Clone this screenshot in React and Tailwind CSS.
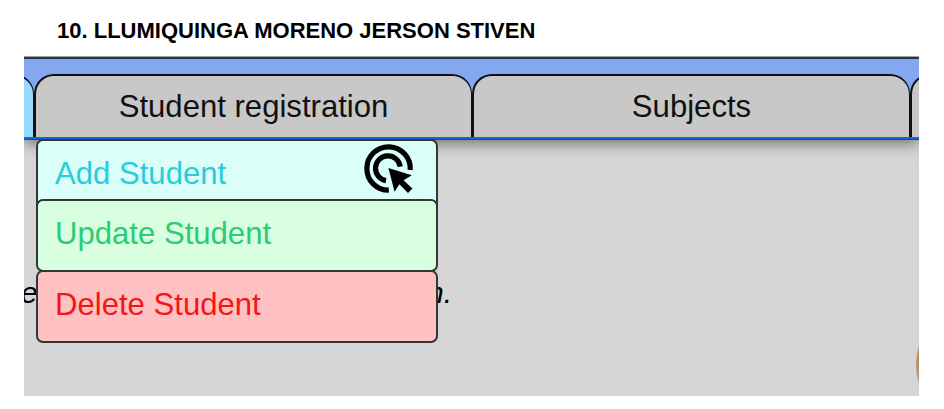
function Tab({ label, className = "" }) {
  return (
    <div
      className={`h-[63px] shrink-0 rounded-t-[20px] border-t-2 border-r border-l-2 border-[#111] bg-[#c8c8c8] text-center leading-[61px] ${className}`}
    >
      {label}
    </div>
  );
}

function ClickIcon() {
  return (
    <svg className="block h-[50px] w-[50px]" viewBox="0 0 50 50" fill="none">
      <path d="M46.2 27A21.7 21.7 0 1 0 24.8 47.2" stroke="#000" strokeWidth="5.2" />
      <path d="M36.2 23.6A12.4 12.4 0 1 0 22 37.6" stroke="#000" strokeWidth="5.2" />
      <path d="M24.4 25L47.8 32.2L39.6 37.2L48.4 45.4L44 50L35.4 41.2L30.6 48.8Z" fill="#000" />
    </svg>
  );
}

const itemBase =
  "relative flex w-[402px] justify-between border-2 border-[#333636] pl-[17px]";

export default function App() {
  return (
    <div className="h-[409px] w-[944px] overflow-hidden bg-white font-['Liberation_Sans',Arial,sans-serif]">
      <h1 className="h-[56px] pt-[18px] pl-[57px] text-[22px] leading-[25px] font-bold whitespace-nowrap text-black">
        10. LLUMIQUINGA MORENO JERSON STIVEN
      </h1>
      <main className="relative ml-[24px] h-[340px] w-[895px] overflow-hidden bg-[#d6d6d6] text-[31.1px]">
        <nav className="relative h-[84px] border-t border-[#a5a5a0] bg-[#83a8f0] text-[#111] shadow-[0_3px_14px_rgba(0,0,0,0.5)]">
          <div className="h-[17px] border-t-2 border-[#26334d]" />
          <div className="flex h-[63px]">
            <Tab label="" className="-ml-[91px] w-[101px] bg-[#94d9ff]!" />
            <Tab label="Student registration" className="w-[438px]" />
            <Tab label="Subjects" className="w-[438px]" />
            <Tab label="" className="w-[101px]" />
          </div>
          <div className="h-[3px] border-b border-[#174b91] bg-[#1765cf]" />
        </nav>
        <p className="absolute top-[220px] -left-[3px] text-[30px] leading-[34px] text-black italic">e</p>
        <p className="absolute top-[220px] left-[403px] text-[30px] leading-[34px] text-black italic">n.</p>
        <div className="relative ml-[12px] leading-[36px]">
          <div className={`${itemBase} -mt-px h-[67px] rounded-t-[7px] bg-[#d9fff8] pt-[15px] text-[#2ccbdc]`}>
            <span>Add Student</span>
            <span className="-mt-[13px] mr-[22px]">
              <ClickIcon />
            </span>
          </div>
          <div className={`${itemBase} -mt-[7px] h-[73px] rounded-[7px] bg-[#d7ffe0] pt-[15px] text-[#2ccb74]`}>Update Student</div>
          <div className={`${itemBase} -mt-[2px] h-[73px] rounded-[7px] bg-[#ffc1c1] pt-[15px] text-[#f31616]`}>Delete Student</div>
        </div>
        <div className="absolute top-[257px] left-[892px] h-[104px] w-[80px] rounded-[50%] bg-linear-to-b from-[#c9b184] via-[#bd8d66] to-[#9ec9bf] blur-[0.5px]" />
      </main>
    </div>
  );
}
